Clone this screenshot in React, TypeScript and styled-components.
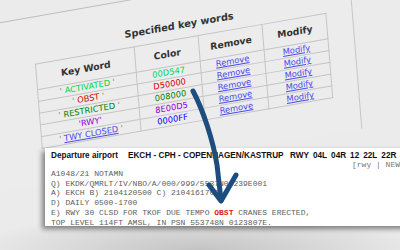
import styled, { createGlobalStyle } from 'styled-components'

const GlobalStyle = createGlobalStyle`
	html, body {
		margin: 0;
		padding: 0;
		background: #ebebeb;
	}
`

const keywords = [
	{ word: 'ACTIVATED', color: '#00D547', code: '00D547' },
	{ word: 'OBST', color: '#D50000', code: 'D50000' },
	{ word: 'RESTRICTED', color: '#008000', code: '008000' },
	{ word: 'RWY', color: '#8E00D5', code: '8E00D5', tight: true },
	{ word: 'TWY CLOSED', color: '#0000FF', code: '0000FF', link: true },
]

const notamLines = [
	'A1048/21 NOTAMN',
	'Q) EKDK/QMRLT/IV/NBO/A/000/999/5537N01239E001',
	'A) EKCH B) 2104120500 C) 2104161700',
	'D) DAILY 0500-1700',
]

const runways = ['RWY', '04L', '04R', '12', '22L', '22R']

function App() {
	return (
		<Stage>
			<GlobalStyle />
			<Paper>
				<Title>Specified key words</Title>
				<Table>
					<colgroup>
						<col style={{ width: 102 }} />
						<col style={{ width: 66 }} />
						<col style={{ width: 66 }} />
						<col style={{ width: 66 }} />
					</colgroup>
					<thead>
						<HeadRow>
							<Th>Key Word</Th>
							<Th>Color</Th>
							<Th>Remove</Th>
							<Th>Modify</Th>
						</HeadRow>
					</thead>
					<tbody>
						{keywords.map((k) => (
							<Row key={k.code}>
								<Td>
									{k.tight ? (
										<Word $color={k.color}>'{k.word}'</Word>
									) : (
										<>
											<Quote>' </Quote>
											{k.link ? <Link>{k.word}</Link> : <Word $color={k.color}>{k.word}</Word>}
											<Quote> '</Quote>
										</>
									)}
								</Td>
								<Td><Word $color={k.color}>{k.code}</Word></Td>
								<Td><Link>Remove</Link></Td>
								<Td><Link>Modify</Link></Td>
							</Row>
						))}
					</tbody>
				</Table>
			</Paper>

			<Notam>
				<NotamHead>
					<DepLabel>Departure airport</DepLabel>
					<Route>EKCH - CPH - COPENHAGEN/KASTRUP</Route>
					<Runways>
						{runways.map((r) => <span key={r}>{r}</span>)}
					</Runways>
				</NotamHead>
				<Tags>[rwy | NEW]</Tags>
				<Mono>
					{notamLines.map((l) => <div key={l}>{l}</div>)}
					<div>E) RWY 30 CLSD FOR TKOF DUE TEMPO <Hit>OBST</Hit> CRANES ERECTED,</div>
					<div>TOP LEVEL 114FT AMSL, IN PSN 553748N 0123807E.</div>
				</Mono>
			</Notam>

			<Arrow viewBox="0 0 400 250" width={400} height={250}>
				<path d="M193 91 C203 110 213 140 217 165 L221 200" />
				<path d="M209 185 L221 201 L236 175" />
			</Arrow>
		</Stage>
	)
}

const Stage = styled.div`
	position: relative;
	width: 400px;
	height: 250px;
	overflow: hidden;
	background:
		radial-gradient(ellipse 230px 38px at 50% 100%, rgba(0, 0, 0, 0.17), rgba(0, 0, 0, 0) 100%),
		#ebebeb;
`

// the scanned page, tilted as in the photo
const Paper = styled.div`
	position: absolute;
	left: -27.5px;
	top: 27px;
	width: 388px;
	height: 171px;
	box-sizing: border-box;
	padding: 27px 28px 0 60px;
	border-top: 1px solid #bdbdbd;
	border-right: 1px solid #c6c6c6;
	background: #ececec;
	transform-origin: 0 0;
	transform: matrix(0.968, -0.17, 0.08, 0.98, 0, 0);
`

const Title = styled.div`
	width: 300px;
	margin-bottom: 6px;
	font: bold 10px 'DejaVu Sans', sans-serif;
	line-height: 14px;
	color: #333;
	text-align: center;
`

const Table = styled.table`
	width: 300px;
	table-layout: fixed;
	border-collapse: collapse;
	font-family: 'DejaVu Sans', sans-serif;
	th, td {
		border: 1px solid #c4c4c4;
		padding: 0;
		text-align: center;
		white-space: nowrap;
	}
`

const HeadRow = styled.tr`
	height: 26px;
`

const Row = styled.tr`
	height: 12px;
`

const Th = styled.th`
	font-size: 9.5px;
	font-weight: bold;
	color: #333;
`

const Td = styled.td`
	font-size: 8.5px;
	line-height: 11px;
`

const Word = styled.span<{ $color: string }>`
	color: ${(p) => p.$color};
`

const Quote = styled.span`
	color: #b07a3a;
	white-space: pre;
`

const Link = styled.span`
	color: #4848ea;
	text-decoration: underline;
`

const Notam = styled.div`
	position: absolute;
	left: 45px;
	top: 148px;
	width: 380px;
	height: 78px;
	box-sizing: border-box;
	padding: 2px 0 0 6px;
	background: #fff;
	box-shadow: -3px 3px 5px rgba(0, 0, 0, 0.45);
`

const NotamHead = styled.div`
	display: flex;
	align-items: center;
	height: 10px;
	font: bold 8.2px 'Liberation Sans', Arial, sans-serif;
	color: #111;
	white-space: nowrap;
`

const DepLabel = styled.span`
	width: 77px;
	flex: none;
`

const Route = styled.span`
	width: 162px;
	flex: none;
`

const Runways = styled.span`
	display: flex;
	gap: 4px;
`

const Tags = styled.div`
	padding-left: 301px;
	font: 8px 'Liberation Mono', monospace;
	line-height: 9px;
	color: #777;
	white-space: nowrap;
`

const Mono = styled.div`
	font: 8px 'Liberation Mono', monospace;
	line-height: 9.7px;
	color: #5e5e5e;
	white-space: pre;
`

const Hit = styled.b`
	color: #e0201c;
`

const Arrow = styled.svg`
	position: absolute;
	left: 0;
	top: 0;
	pointer-events: none;
	fill: none;
	stroke: #1c4d7e;
	stroke-width: 5;
	stroke-linecap: round;
	stroke-linejoin: round;
`

export default App
